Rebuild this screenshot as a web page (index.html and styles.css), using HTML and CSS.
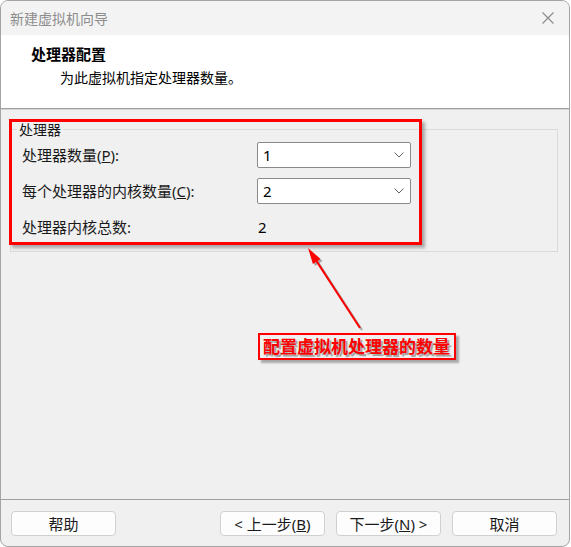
FILE: index.html
```html
<!DOCTYPE html>
<html lang="zh-CN">
<head>
<meta charset="utf-8">
<title>新建虚拟机向导</title>
<link rel="stylesheet" href="styles.css">
</head>
<body>
<div class="window">
  <div class="titlebar">
    <span class="title">新建虚拟机向导</span>
    <svg class="close" width="12" height="12" viewBox="0 0 12 12"><path d="M0.5 0.5 L11.5 11.5 M11.5 0.5 L0.5 11.5" stroke="#8a8a8a" stroke-width="1.1" fill="none"/></svg>
  </div>
  <div class="header">
    <div class="h-title">处理器配置</div>
    <div class="h-sub">为此虚拟机指定处理器数量。</div>
  </div>
  <div class="content">
    <div class="group">
      <span class="legend">处理器</span>
      <div class="grid">
        <span class="lbl">处理器数量(<u>P</u>):</span>
        <div class="select"><span class="val">1</span><svg class="chev" width="10" height="6" viewBox="0 0 10 6"><path d="M0.5 0.5 L5 5 L9.5 0.5" stroke="#606060" stroke-width="1" fill="none"/></svg></div>
        <span class="lbl">每个处理器的内核数量(<u>C</u>):</span>
        <div class="select"><span class="val">2</span><svg class="chev" width="10" height="6" viewBox="0 0 10 6"><path d="M0.5 0.5 L5 5 L9.5 0.5" stroke="#606060" stroke-width="1" fill="none"/></svg></div>
        <span class="lbl">处理器内核总数:</span>
        <span class="total">2</span>
      </div>
    </div>
  </div>
  <div class="footer">
    <button class="btn">帮助</button>
    <div class="btn-group">
      <button class="btn">&lt; 上一步(<u>B</u>)</button>
      <button class="btn">下一步(<u>N</u>) &gt;</button>
      <button class="btn">取消</button>
    </div>
  </div>
  <div class="anno-rect"></div>
  <svg class="anno-arrow" width="571" height="547" viewBox="0 0 571 547">
    <g transform="translate(2,2)" opacity="0.3">
      <line x1="360" y1="328" x2="316.7" y2="261.4" stroke="#000" stroke-width="2"/>
      <polygon points="308,248 320.5,259 312.9,263.9" fill="#000"/>
    </g>
    <line x1="360" y1="328" x2="316.7" y2="261.4" stroke="#ff0000" stroke-width="2"/>
    <polygon points="308,248 320.5,259 312.9,263.9" fill="#ff0000"/>
  </svg>
  <div class="anno-label">配置虚拟机处理器的数量</div>
</div>
</body>
</html>
```

FILE: styles.css
```css
* { box-sizing: border-box; }
html, body { margin: 0; padding: 0; background: #ffffff; }
body {
  font-family: "Noto Sans", "Noto Sans CJK SC", sans-serif;
  color: #1a1a1a;
}
.window {
  position: relative;
  width: 570px;
  height: 547px;
  border: 1px solid #a4a4a4;
  border-radius: 8px;
  overflow: hidden;
  background: #f0f0f0;
  display: flex;
  flex-direction: column;
}
.titlebar {
  height: 34px;
  background: #f3f3f3;
  display: flex;
  align-items: center;
  justify-content: space-between;
  padding: 0 15px 0 9px;
}
.title {
  font-family: "Noto Sans CJK SC", sans-serif;
  font-size: 14px;
  line-height: 18px;
  color: #8c8c8c;
}
.close { display: block; }
.header {
  height: 74px;
  background: #ffffff;
  border-bottom: 1px solid #a0a0a0;
  box-shadow: 0 1px 0 #d4d4d4;
  padding-top: 9px;
}
.h-title {
  font-family: "Noto Sans CJK SC", sans-serif;
  font-weight: bold;
  font-size: 15px;
  line-height: 20px;
  padding-left: 30px;
  color: #000;
}
.h-sub {
  font-family: "Noto Sans CJK SC", sans-serif;
  font-size: 14px;
  line-height: 20px;
  padding-left: 59px;
  margin-top: 3px;
  color: #000;
}
.content {
  flex: 1;
  padding: 20px 11px 0 9px;
}
.group {
  position: relative;
  border: 1px solid #dadada;
  padding: 12px 0 11px 11px;
}
.legend {
  position: absolute;
  left: 6px;
  top: -9px;
  padding: 0 2px;
  background: #f0f0f0;
  font-family: "Noto Sans CJK SC", sans-serif;
  font-size: 14px;
  line-height: 16px;
}
.grid {
  display: grid;
  grid-template-columns: 235px 154px;
  grid-auto-rows: 26px;
  row-gap: 10px;
  align-items: center;
}
.lbl {
  font-size: 15px;
  line-height: 20px;
}
.select {
  height: 26px;
  background: #ffffff;
  border: 1px solid #8a8a8a;
  border-radius: 2px;
  display: flex;
  align-items: center;
  justify-content: space-between;
  padding: 0 6px 0 5px;
}
.val { font-size: 15px; line-height: 20px; color: #000; }
.chev { display: block; }
.total { font-size: 15px; line-height: 20px; padding-left: 1px; color: #000; }
.footer {
  height: 47px;
  border-top: 1px solid #a0a0a0;
  display: flex;
  justify-content: space-between;
  align-items: flex-start;
  padding: 11px 12px 0 10px;
}
.btn-group { display: flex; gap: 11px; }
.btn {
  width: 105px;
  height: 25px;
  background: #fdfdfd;
  border: 1px solid #d0d0d0;
  border-radius: 4px;
  font-family: "Noto Sans", "Noto Sans CJK SC", sans-serif;
  font-size: 15px;
  line-height: 20px;
  color: #1a1a1a;
  padding: 0;
}
.anno-rect {
  position: absolute;
  left: 8px;
  top: 118px;
  width: 413px;
  height: 126px;
  border: 3px solid #ff0000;
  box-shadow: 3px 3px 3px rgba(0, 0, 0, 0.3);
}
.anno-arrow {
  position: absolute;
  left: -1px;
  top: -1px;
  pointer-events: none;
}
.anno-label {
  position: absolute;
  left: 257px;
  top: 332px;
  width: 198px;
  height: 27px;
  border: 2px solid #ff0000;
  box-shadow: 3px 3px 2px rgba(0, 0, 0, 0.3);
  padding-left: 3px;
  font-family: "Noto Sans CJK SC", sans-serif;
  font-weight: bold;
  font-size: 17px;
  line-height: 22px;
  color: #ff0000;
  text-shadow: 2px 2px 1px rgba(0, 0, 0, 0.35);
  white-space: nowrap;
}
```
